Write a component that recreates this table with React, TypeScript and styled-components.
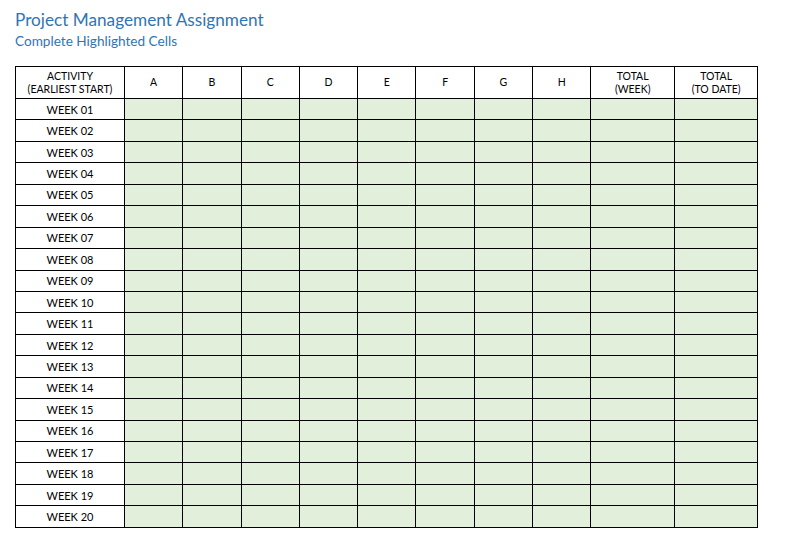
import React from "react";
import styled, { createGlobalStyle } from "styled-components";

const GlobalStyle = createGlobalStyle`
  body {
    margin: 0;
    background: #ffffff;
    font-family: Lato, "Open Sans", sans-serif;
  }
`;

const columns = ["A", "B", "C", "D", "E", "F", "G", "H"];
const weeks = Array.from({ length: 20 }, (_, i) => `WEEK ${String(i + 1).padStart(2, "0")}`);

export default function App() {
  return (
    <>
      <GlobalStyle />
      <SPage>
        <SHeading>
          <STitle>Project Management Assignment</STitle>
          <SSubtitle>Complete Highlighted Cells</SSubtitle>
        </SHeading>
        <STable>
          <colgroup>
            <col style={{ width: 109 }} />
            {columns.map((c) => (
              <col key={c} style={{ width: 58.3 }} />
            ))}
            <col style={{ width: 83.6 }} />
            <col style={{ width: 83.4 }} />
          </colgroup>
          <thead>
            <tr>
              <SHeadCell>
                ACTIVITY
                <br />
                (EARLIEST START)
              </SHeadCell>
              {columns.map((c) => (
                <SHeadCell key={c}>{c}</SHeadCell>
              ))}
              <SHeadCell>
                TOTAL
                <br />
                (WEEK)
              </SHeadCell>
              <SHeadCell>
                TOTAL
                <br />
                (TO DATE)
              </SHeadCell>
            </tr>
          </thead>
          <tbody>
            {weeks.map((w) => (
              <SRow key={w}>
                <SLabelCell>{w}</SLabelCell>
                {columns.map((c) => (
                  <SInputCell key={c} />
                ))}
                <SInputCell />
                <SInputCell />
              </SRow>
            ))}
          </tbody>
        </STable>
      </SPage>
    </>
  );
}

const SPage = styled.div`
  padding: 9px 0 0 15px;
`;

const SHeading = styled.div`
  display: flex;
  flex-direction: column;
  margin-bottom: 17px;
`;

const STitle = styled.h1`
  margin: 0;
  font-size: 17.2px;
  font-weight: 400;
  line-height: 21px;
  color: #2e75b6;
`;

const SSubtitle = styled.h2`
  margin: 3px 0 0;
  font-size: 13.6px;
  font-weight: 400;
  line-height: 16px;
  color: #2e75b6;
`;

const STable = styled.table`
  border-collapse: collapse;
  table-layout: fixed;
  width: 743px;
  color: #000000;
  font-size: 11px;
`;

const SHeadCell = styled.th`
  height: 31px;
  padding: 0;
  border: 1px solid #000000;
  font-weight: 400;
  font-size: 10.5px;
  line-height: 12.5px;
  text-align: center;
  vertical-align: middle;
`;

const SRow = styled.tr`
  height: 21.45px;
`;

const SLabelCell = styled.td`
  padding: 0;
  border: 1px solid #000000;
  text-align: center;
  vertical-align: middle;
  background: #ffffff;
`;

const SInputCell = styled.td`
  padding: 0;
  border: 1px solid #000000;
  background: #e2efda;
`;
